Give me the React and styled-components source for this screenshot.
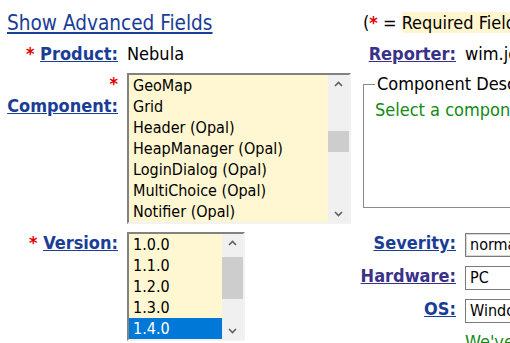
import styled, { createGlobalStyle } from "styled-components";

const GlobalStyle = createGlobalStyle`
  body {
    margin: 0;
    overflow: hidden;
    background: #fff;
    color: #000;
    font-family: "DejaVu Sans Condensed", "DejaVu Sans", Verdana, sans-serif;
    font-stretch: condensed;
    font-size: 18px;
  }
`;

const Page = styled.div`
  width: 800px;
  padding-left: 7px;
`;

const Intro = styled.div`
  margin-top: -21px;
  line-height: 22px;
  white-space: nowrap;
`;

const Link = styled.a`
  color: ${p => (p.$visited ? "#3a3189" : "#1a3d96")};
  text-decoration: underline;
  cursor: pointer;
`;

const Form = styled.div`
  display: grid;
  grid-template-columns: 111px 224px 96px 1fr;
  column-gap: 9px;
  row-gap: 8px;
  margin-top: 10px;
  align-items: start;
`;

const Cell = styled.div`
  grid-column: ${p => p.$col};
  line-height: 22px;
  white-space: nowrap;
`;

const ShowLink = styled(Link)`
  grid-column: 1 / span 2;
  justify-self: start;
  font-size: 20.6px;
  line-height: 24px;
`;

const Note = styled.div`
  grid-column: 3 / span 2;
  margin-left: 3px;
  line-height: 24px;
  white-space: nowrap;
`;

const Highlight = styled.span`
  background: #fff6cf;
`;

const Star = styled.span`
  color: #e00000;
  font-weight: bold;
`;

const Label = styled.div`
  grid-column: ${p => p.$col};
  text-align: right;
  font-weight: bold;
  line-height: 22px;
  white-space: ${p => (p.$wrap ? "normal" : "nowrap")};
`;

const ListBox = styled.div`
  grid-column: 2;
  grid-row: ${p => p.$rows || "auto"};
  display: flex;
  width: ${p => p.$width}px;
  box-sizing: border-box;
  border-style: solid;
  border-width: 2px;
  border-color: #828282 #f2f2f2 #f2f2f2 #828282;
  background: #fff7d1;
  font-size: 16px;
`;

const Options = styled.ul`
  flex: 1;
  margin: 0;
  padding: 0;
  list-style: none;
`;

const Option = styled.li`
  line-height: 21px;
  padding-left: 4px;
  white-space: nowrap;
  background: ${p => (p.$selected ? "#0078d7" : "transparent")};
  color: ${p => (p.$selected ? "#fff" : "#000")};
`;

const ScrollBar = styled.div`
  width: 21px;
  display: flex;
  flex-direction: column;
  background: #f0f0f0;
`;

const ScrollButton = styled.div`
  height: 17px;
  display: flex;
  align-items: center;
  justify-content: center;
`;

const Track = styled.div`
  flex: 1;
`;

const Thumb = styled.div`
  background: #cdcdcd;
`;

const Fieldset = styled.fieldset`
  grid-column: 3 / span 2;
  margin: 0 0 0 3px;
  padding: 0 11px;
  height: 135px;
  box-sizing: border-box;
  border: 1px solid #8a8a8a;
  min-width: 0;
`;

const Legend = styled.legend`
  padding: 0 2px;
  line-height: 22px;
`;

const Hint = styled.div`
  margin-top: 4px;
  line-height: 22px;
  color: #128a12;
  white-space: nowrap;
`;

const Dropdown = styled.div`
  grid-column: 4;
  margin-top: 1px;
  width: 160px;
  height: 24px;
  box-sizing: border-box;
  padding-left: 4px;
  border: 1px solid #7a7a7a;
  box-shadow: ${p => (p.$focus ? "inset 0 0 0 1px #d9d9d9" : "none")};
  background: #fff;
  font-size: 16px;
  line-height: 22px;
  white-space: nowrap;
`;

const GreenNote = styled(Cell)`
  color: #128a12;
`;

const Chevron = ({ up }) => (
  <svg width="9" height="6" viewBox="0 0 9 6">
    <polyline
      points={up ? "1,5 4.5,1.5 8,5" : "1,1 4.5,4.5 8,1"}
      fill="none"
      stroke="#606060"
      strokeWidth="1.6"
    />
  </svg>
);

function SelectList({ items, selected, width, rows, thumbTop, thumbHeight }) {
  return (
    <ListBox $width={width} $rows={rows}>
      <Options>
        {items.map(item => (
          <Option key={item} $selected={item === selected}>
            {item}
          </Option>
        ))}
      </Options>
      <ScrollBar>
        <ScrollButton>
          <Chevron up />
        </ScrollButton>
        <Track>
          <Thumb style={{ marginTop: thumbTop, height: thumbHeight }} />
        </Track>
        <ScrollButton>
          <Chevron />
        </ScrollButton>
      </ScrollBar>
    </ListBox>
  );
}

const components = [
  "GeoMap",
  "Grid",
  "Header (Opal)",
  "HeapManager (Opal)",
  "LoginDialog (Opal)",
  "MultiChoice (Opal)",
  "Notifier (Opal)",
];

const versions = ["1.0.0", "1.1.0", "1.2.0", "1.3.0", "1.4.0"];

export default function App() {
  return (
    <Page>
      <GlobalStyle />
      <Intro>
        Before reporting a bug, please read the{" "}
        <Link>bug writing guidelines</Link>, please look at the list
      </Intro>
      <Form>
        <ShowLink>Show Advanced Fields</ShowLink>
        <Note>
          (<Star>*</Star> = <Highlight>Required Fields</Highlight>)
        </Note>

        <Label $col={1}>
          <Star>*</Star> <Link>Product:</Link>
        </Label>
        <Cell $col={2}>Nebula</Cell>
        <Label $col={3}>
          <Link $visited>Reporter:</Link>
        </Label>
        <Cell $col={4}>wim.jongman@remainsoftware.com</Cell>

        <Label $col={1} $wrap>
          <Star>*</Star> <Link>Component:</Link>
        </Label>
        <SelectList items={components} width={224} thumbTop={39} thumbHeight={21} />
        <Fieldset>
          <Legend>Component Description</Legend>
          <Hint>Select a component to read its description.</Hint>
        </Fieldset>

        <Label $col={1}>
          <Star>*</Star> <Link>Version:</Link>
        </Label>
        <SelectList
          items={versions}
          selected="1.4.0"
          width={118}
          rows="span 4"
          thumbTop={6}
          thumbHeight={42}
        />
        <Label $col={3}>
          <Link>Severity:</Link>
        </Label>
        <Dropdown $focus>normal</Dropdown>
        <Label $col={3}>
          <Link $visited>Hardware:</Link>
        </Label>
        <Dropdown>PC</Dropdown>
        <Label $col={3}>
          <Link>OS:</Link>
        </Label>
        <Dropdown>Windows XP</Dropdown>
        <GreenNote $col={4}>We've made a guess at your operating system.</GreenNote>
      </Form>
    </Page>
  );
}
